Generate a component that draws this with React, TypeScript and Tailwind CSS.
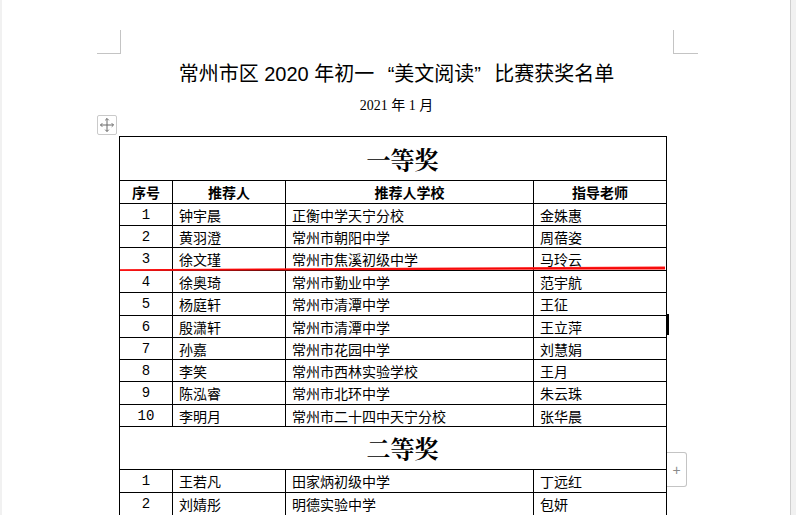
import React from "react";

type Row = { n: string; name: string; school: string; teacher: string; h: string };

const first: Row[] = [
  { n: "1", name: "钟宇晨", school: "正衡中学天宁分校", teacher: "金姝惠", h: "h-[22px]" },
  { n: "2", name: "黄羽澄", school: "常州市朝阳中学", teacher: "周蓓姿", h: "h-[22px]" },
  { n: "3", name: "徐文瑾", school: "常州市焦溪初级中学", teacher: "马玲云", h: "h-[23px]" },
  { n: "4", name: "徐奥琦", school: "常州市勤业中学", teacher: "范宇航", h: "h-[22px]" },
  { n: "5", name: "杨庭轩", school: "常州市清潭中学", teacher: "王征", h: "h-[23px]" },
  { n: "6", name: "殷潇轩", school: "常州市清潭中学", teacher: "王立萍", h: "h-[22px]" },
  { n: "7", name: "孙嘉", school: "常州市花园中学", teacher: "刘慧娟", h: "h-[22px]" },
  { n: "8", name: "李笑", school: "常州市西林实验学校", teacher: "王月", h: "h-[22px]" },
  { n: "9", name: "陈泓睿", school: "常州市北环中学", teacher: "朱云珠", h: "h-[23px]" },
  { n: "10", name: "李明月", school: "常州市二十四中天宁分校", teacher: "张华晨", h: "h-[22px]" },
];

const second: Row[] = [
  { n: "1", name: "王若凡", school: "田家炳初级中学", teacher: "丁远红", h: "h-[23px]" },
  { n: "2", name: "刘婧彤", school: "明德实验中学", teacher: "包妍", h: "h-[22px]" },
];

const cjk = "font-['Noto_Sans_CJK_SC',sans-serif]";
const grid = "grid grid-cols-[53px_113px_248px_132px]";

function DataRow({ r, last }: { r: Row; last?: boolean }) {
  return (
    <div className={`${grid} ${r.h} ${last ? "" : "border-b border-black"} text-[14px] leading-none text-black`}>
      <div className="flex items-center justify-center border-r border-black font-['Liberation_Mono',monospace] text-[14px]">
        {r.n}
      </div>
      <div className={`flex items-center border-r border-black pl-[6px] ${cjk}`}>{r.name}</div>
      <div className={`flex items-center border-r border-black pl-[6px] ${cjk}`}>{r.school}</div>
      <div className={`flex items-center pl-[6px] ${cjk}`}>{r.teacher}</div>
    </div>
  );
}

function Section({ title, h }: { title: string; h: string }) {
  return (
    <div
      className={`flex ${h} items-center justify-center border-b border-black pl-[19px] font-['Noto_Serif_CJK_SC','Noto_Sans_CJK_SC',serif] text-[24px] font-bold leading-none text-black`}
    >
      {title}
    </div>
  );
}

export default function App() {
  return (
    <div className="relative h-[515px] w-[796px] overflow-hidden bg-[#f1f1f1]">
      <div className="relative ml-[2px] h-[515px] w-[789px] border-r border-[#cfcfcf] bg-white pt-[30px]">
        {/* corner marks */}
        <div className="ml-[95px] flex h-[24px] w-[601px] justify-between">
          <div className="h-[24px] w-[24px] border-b border-r border-[#c4c4c4]" />
          <div className="h-[24px] w-[25px] border-b border-l border-[#c4c4c4]" />
        </div>

        <div className="ml-[118px] w-[553px]">
          <div className="mt-[6px] text-center font-['Liberation_Sans','Noto_Sans_CJK_SC',sans-serif] text-[20px] leading-[28px] text-black">
            常州市区 2020 年初一
            <span className="inline-block w-[20px] text-right">“</span>
            美文阅读
            <span className="inline-block w-[20px] text-left">”</span>
            比赛获奖名单
          </div>
          <div className="mt-[8px] text-center font-['Liberation_Serif','Noto_Sans_CJK_SC',serif] text-[14px] leading-[20px] text-black">
            2021 年 1 月
          </div>

          <div className="relative ml-[-1px] mt-[20px] w-[548px]">
            {/* move handle */}
            <div className="absolute left-[-22px] top-[-21px] flex h-[20px] w-[20px] items-center justify-center rounded-[2px] border border-[#cacaca] bg-white">
              <svg width="16" height="16" viewBox="0 0 16 16" fill="none" stroke="#6b6b6b" strokeWidth="1">
                <path d="M8 1.5v13M1.5 8h13" />
                <path d="M6.2 3.3L8 1.5l1.8 1.8M6.2 12.7L8 14.5l1.8-1.8M3.3 6.2L1.5 8l1.8 1.8M12.7 6.2L14.5 8l-1.8 1.8" />
              </svg>
            </div>

            <div className="border border-black">
              <Section title="一等奖" h="h-[44px]" />
              <div className={`${grid} h-[23px] border-b border-black ${cjk} text-[14px] font-bold leading-none text-black`}>
                <div className="flex items-center justify-center border-r border-black">序号</div>
                <div className="flex items-center justify-center border-r border-black">推荐人</div>
                <div className="flex items-center justify-center border-r border-black">推荐人学校</div>
                <div className="flex items-center justify-center">指导老师</div>
              </div>
              {first.map((r) => (
                <DataRow key={"a" + r.n} r={r} />
              ))}
              <Section title="二等奖" h="h-[43px]" />
              {second.map((r, i) => (
                <DataRow key={"b" + r.n} r={r} last={i === second.length - 1} />
              ))}
            </div>

            {/* row resize marker */}
            <div className="absolute left-[548px] top-[178px] h-[21px] w-[2px] bg-black" />

            {/* add column button */}
            <div className="absolute left-[548px] top-[316px] flex h-[35px] w-[20px] items-center justify-center rounded-r-[3px] border border-l-0 border-[#c4c4c4] bg-white font-['Liberation_Sans',sans-serif] text-[14px] leading-none text-[#8a8a8a]">
              +
            </div>
          </div>
        </div>

        {/* red annotation line */}
        <svg className="absolute left-[116px] top-[264px]" width="552" height="8" viewBox="0 0 552 8">
          <path d="M2 5.2 L547 2.6 L547 5.4 L2 6.9 Z" fill="#ff1a1a" />
          <path d="M2 5.8 L547 3.6 L547 4.6 L2 6.3 Z" fill="#ee0000" />
        </svg>
      </div>
    </div>
  );
}
